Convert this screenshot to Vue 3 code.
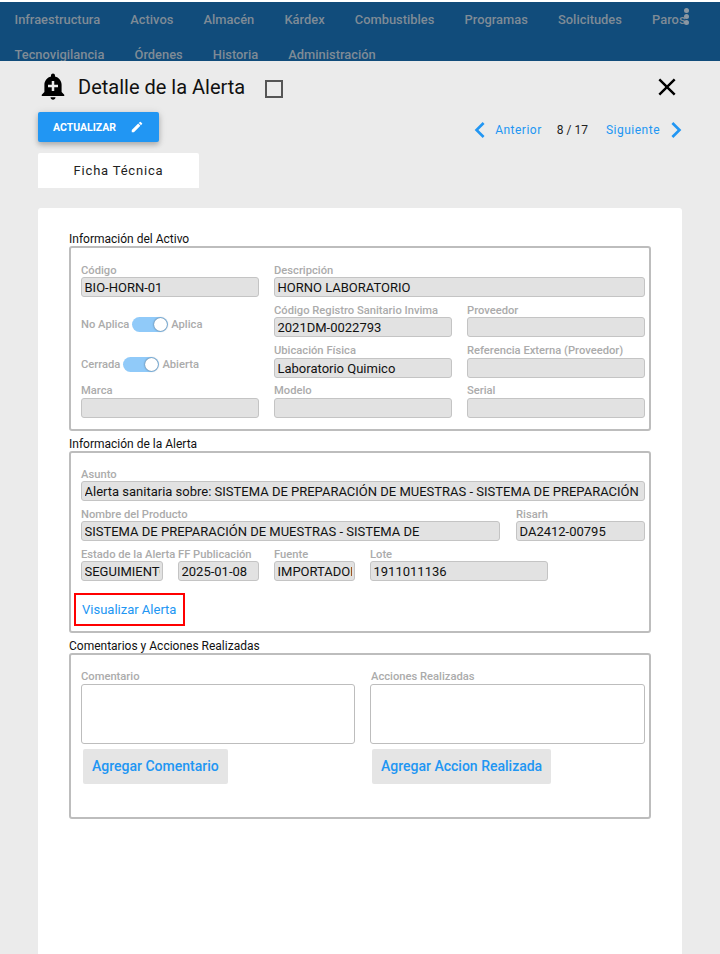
<script setup>
const nav1 = ['Infraestructura','Activos','Almacén','Kárdex','Combustibles','Programas','Solicitudes','Paros','Tecnovigilancia','Órdenes','Historia','Administración']
</script>

<template>
  <div class="page">
    <header class="nav">
      <span v-for="n in nav1" :key="n" class="nav-item">{{ n }}</span>
      <span class="dots"><i></i><i></i><i></i></span>
    </header>
    <main class="content">
      <div class="title-row">
        <svg class="bell" viewBox="0 0 24 24" width="30" height="30"><path fill="#000" d="M10.01 21.01c0 1.1.89 1.99 1.99 1.99s1.99-.89 1.99-1.99h-3.98zM18.88 16.82V11c0-3.25-2.25-5.97-5.29-6.69v-.72C13.59 2.71 12.88 2 12 2s-1.59.71-1.59 1.59v.72C7.37 5.03 5.12 7.75 5.12 11v5.82L3 18.94V20h18v-1.06l-2.12-2.12zM16 13.01h-3v3h-2v-3H8V11h3V8h2v3h3v2.01z"/></svg>
        <h1 class="title">Detalle de la Alerta</h1>
        <span class="checkbox"></span>
        <svg class="close" viewBox="0 0 24 24" width="24" height="24"><path fill="#000" d="M19 6.41 17.59 5 12 10.59 6.41 5 5 6.41 10.59 12 5 17.59 6.41 19 12 13.41 17.59 19 19 17.59 13.41 12z"/></svg>
      </div>
      <div class="action-row">
        <button class="update">ACTUALIZAR
          <svg viewBox="0 0 24 24" width="14" height="14"><path fill="#fff" d="M3 17.25V21h3.75L17.81 9.94l-3.75-3.75L3 17.25zM20.71 7.04a1 1 0 0 0 0-1.41l-2.34-2.34a1 1 0 0 0-1.41 0l-1.83 1.83 3.75 3.75 1.83-1.83z"/></svg>
        </button>
        <div class="pager">
          <svg class="prev" viewBox="0 0 24 24" width="32" height="32"><path fill="#2196f3" d="M15.41 7.41 14 6l-6 6 6 6 1.41-1.41L10.83 12z"/></svg>
          <span class="pg-link">Anterior</span>
          <span class="pg-count">8 / 17</span>
          <span class="pg-link">Siguiente</span>
          <svg viewBox="0 0 24 24" width="32" height="32"><path fill="#2196f3" d="M10 6 8.59 7.41 13.17 12l-4.58 4.59L10 18l6-6z"/></svg>
        </div>
      </div>
      <div class="tab">Ficha Técnica</div>
      <section class="card">
        <div class="legend first">Información del Activo</div>
        <div class="box box-asset">
          <div class="grid">
            <div class="field"><label>Código</label><input class="input" readonly value="BIO-HORN-01" /></div>
            <div class="field span2"><label>Descripción</label><input class="input" readonly value="HORNO LABORATORIO" /></div>

            <div class="toggle-cell">
              <span>No Aplica</span><span class="switch"><i></i></span><span>Aplica</span>
            </div>
            <div class="field"><label>Código Registro Sanitario Invima</label><input class="input" readonly value="2021DM-0022793" /></div>
            <div class="field"><label>Proveedor</label><input class="input" readonly /></div>

            <div class="toggle-cell">
              <span>Cerrada</span><span class="switch"><i></i></span><span>Abierta</span>
            </div>
            <div class="field tall"><label>Ubicación Física</label><input class="input" readonly value="Laboratorio Quimico" /></div>
            <div class="field tall"><label>Referencia Externa (Proveedor)</label><input class="input" readonly /></div>

            <div class="field raised"><label>Marca</label><input class="input" readonly /></div>
            <div class="field raised"><label>Modelo</label><input class="input" readonly /></div>
            <div class="field raised"><label>Serial</label><input class="input" readonly /></div>
          </div>
        </div>

        <div class="legend">Información de la Alerta</div>
        <div class="box box-alert">
          <div class="field"><label>Asunto</label><input class="input" readonly value="Alerta sanitaria sobre: SISTEMA DE PREPARACIÓN DE MUESTRAS - SISTEMA DE PREPARACIÓN" /></div>
          <div class="row-product">
            <div class="field"><label>Nombre del Producto</label><input class="input" readonly value="SISTEMA DE PREPARACIÓN DE MUESTRAS - SISTEMA DE" /></div>
            <div class="field"><label>Risarh</label><input class="input" readonly value="DA2412-00795" /></div>
          </div>
          <div class="row-status">
            <div class="field"><label>Estado de la Alerta</label><input class="input" readonly value="SEGUIMIENTO" /></div>
            <div class="field"><label>FF Publicación</label><input class="input" readonly value="2025-01-08" /></div>
            <div class="field"><label>Fuente</label><input class="input" readonly value="IMPORTADOR" /></div>
            <div class="field"><label>Lote</label><input class="input" readonly value="1911011136" /></div>
          </div>
          <a class="visual">Visualizar Alerta</a>
        </div>

        <div class="legend">Comentarios y Acciones Realizadas</div>
        <div class="box box-comments">
          <div class="comment-grid">
            <div class="comment-col">
              <label>Comentario</label>
              <div class="area"></div>
              <span class="add">Agregar Comentario</span>
            </div>
            <div class="comment-col">
              <label class="shift">Acciones Realizadas</label>
              <div class="area"></div>
              <span class="add">Agregar Accion Realizada</span>
            </div>
          </div>
        </div>
      </section>
    </main>
  </div>
</template>

<style>
html, body { margin: 0; background: #ebebeb; }
</style>

<style scoped>
.page { width: 720px; height: 954px; overflow: hidden; font-family: Roboto, sans-serif; background: #ebebeb; position: relative; }
.nav { box-sizing: border-box; height: 61px; border-top: 2px solid #fff; background: #114c7b; overflow: hidden; position: relative; display: flex; flex-wrap: wrap; align-content: flex-start; column-gap: 30.2px; padding-left: 14.5px; }
.nav-item { font-size: 12.88px; font-weight: 500; line-height: 35px; height: 35px; color: #7f8b96; white-space: nowrap; }
.dots { position: absolute; left: 683.5px; top: 6px; display: flex; flex-direction: column; gap: 1px; }
.dots i { width: 5px; height: 5px; border-radius: 50%; background: #8b97a2; display: block; }
.content { padding: 0 38px; }
.title-row { display: flex; align-items: center; height: 51px; }
.bell { margin-top: -2px; }
.title { margin: 0 0 0 10px; font-size: 20px; font-weight: 400; color: #111; line-height: 1; }
.checkbox { box-sizing: border-box; width: 18px; height: 18px; border: 2px solid #555; margin-left: 20px; margin-top: 4px; }
.close { margin-left: auto; margin-right: 3px; transform: scale(1.22); }
.action-row { display: flex; justify-content: space-between; align-items: flex-start; height: 30px; }
.update { width: 121px; height: 30px; box-sizing: border-box; padding: 0 0 0 15px; border: 0; border-radius: 2px; background: #2196f3; color: #fff; font: 700 10.5px Roboto, sans-serif; display: flex; align-items: center; gap: 14px; box-shadow: 0 3px 5px rgba(0,0,0,.2), 0 1px 8px rgba(0,0,0,.12); }
.pager { display: flex; align-items: center; height: 32px; margin-top: 2px; font-size: 12px; letter-spacing: .5px; margin-right: -10px; }
.prev { margin-right: -1px; }
.pg-link { color: #2196f3; }
.pg-count { color: #222; margin: 0 18px 0 15px; letter-spacing: 0; }
.tab { width: 161px; height: 35px; margin-top: 11px; background: #fff; border-radius: 2px 2px 0 0; display: flex; align-items: center; justify-content: center; font-size: 13px; letter-spacing: .8px; color: #222; }
.card { background: #fff; margin-top: 20px; height: 760px; box-sizing: border-box; padding: 0 31px; border-radius: 3px 3px 0 0; width: 644px; }
.legend { font-size: 12px; line-height: 14px; height: 14px; color: #111; margin-top: 6px; }
.legend.first { padding-top: 24px; margin-top: 0; }
.box { box-sizing: border-box; width: 582px; border: 2px solid #bdbdbd; border-radius: 3px; padding: 0 4px 0 10px; }
.box-asset { height: 185px; padding-top: 16px; }
.grid { display: grid; grid-template-columns: 178px 178px 178px; column-gap: 15px; }
.span2 { grid-column: span 2; }
.field { min-width: 0; }
label { display: block; font-size: 11.2px; font-weight: 500; line-height: 13px; height: 13px; color: #ababab; white-space: nowrap; }
.input { display: block; width: 100%; box-sizing: border-box; height: 20px; margin: 0 0 7px; border: 1px solid #c4c4c4; border-radius: 3px; background: #e2e2e2; font: 400 13px Roboto, sans-serif; padding: 1px 2px 0 2.5px; color: #111; outline: none; }
.field.tall label { height: 14px; }
.field.raised label { line-height: 11px; }
.toggle-cell { display: flex; align-items: center; gap: 3px; font-size: 11.2px; font-weight: 500; color: #ababab; height: 40px; padding-top: 1px; box-sizing: border-box; }
.switch { width: 36px; height: 15px; border-radius: 8px; background: #90caf9; position: relative; display: block; }
.switch i { position: absolute; right: 1px; top: 1px; width: 13px; height: 13px; border-radius: 50%; background: #fff; box-shadow: 0 0 2px rgba(0,0,0,.6); display: block; }
.box-alert { height: 182px; padding-top: 15px; }
.row-product { display: grid; grid-template-columns: 419px 129px; column-gap: 16px; }
.row-status { display: grid; grid-template-columns: 82px 81px 81px 178px; column-gap: 15px; }
.visual { box-sizing: border-box; display: flex; align-items: center; width: 111px; height: 33px; margin: 5px 0 0 -7px; padding-left: 6px; border: 2px solid #f00; color: #2196f3; font-size: 13px; }
.box-comments { height: 166px; padding-top: 15px; }
.comment-grid { display: grid; grid-template-columns: 274px 275px; column-gap: 15px; }
.comment-col label { height: 14px; }
.comment-col label.shift { padding-left: 1px; }
.area { box-sizing: border-box; height: 60px; border: 1px solid #bdbdbd; border-radius: 3px; background: #fff; }
.add { display: inline-flex; align-items: center; box-sizing: border-box; height: 35px; margin: 5px 0 0 2px; padding: 0 9px 2px; background: #e5e5e5; border-radius: 2px; color: #2196f3; font-size: 14px; font-weight: 500; }
</style>
